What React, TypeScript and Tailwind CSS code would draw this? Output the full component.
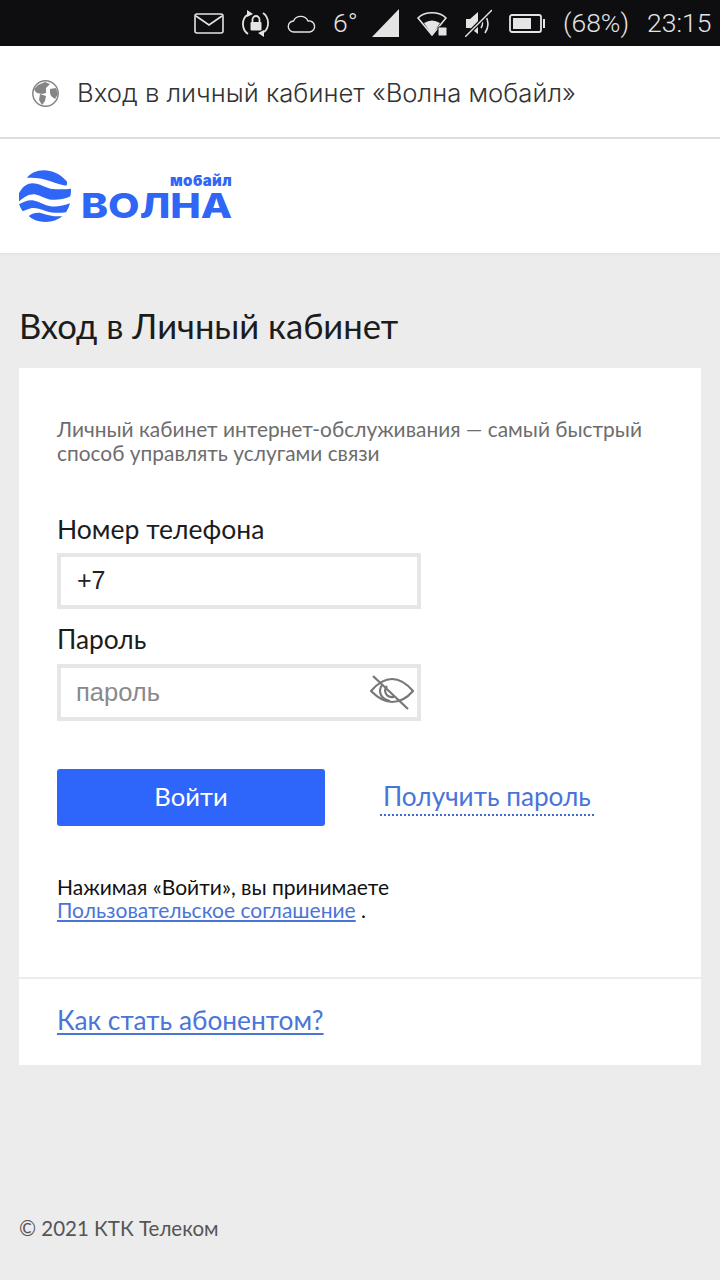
const geo = "font-['Lato','Noto_Sans',sans-serif]";

function StatusBar() {
  return (
    <div className="h-[46px] bg-[#0e0e10] flex items-center pl-[194px] text-[#e4e4e4] font-['Roboto',sans-serif] font-light">
      <svg width="30" height="21" viewBox="0 0 30 21" fill="none" stroke="currentColor" strokeWidth="1.6">
        <rect x="1" y="1" width="28" height="19" rx="2" />
        <path d="M2 3l13 9 13-9" />
      </svg>
      <svg className="ml-[17px]" width="29" height="27" viewBox="0 0 29 27" fill="none" stroke="currentColor" strokeWidth="1.8">
        <path d="M6 5C0 10 1 20 7 24M23 22c6-5 5-15-1-19" />
        <path d="M6 0l6 4-6 3zM23 27l-6-4 6-3z" fill="currentColor" stroke="none" />
        <path d="M11.500 12V9.500a3.500 3.500 0 0 1 7 0V12" />
        <rect x="9.500" y="12" width="11" height="8.500" rx="1" fill="currentColor" stroke="none" />
      </svg>
      <svg className="ml-[17px]" width="29" height="20" viewBox="0 0 29 20" fill="none" stroke="currentColor" strokeWidth="1.4">
        <path d="M7 19a5.500 5.500 0 0 1-.5-11A8 8 0 0 1 21 8a5.500 5.500 0 0 1 2 11z" />
      </svg>
      <span className="ml-[17px] w-[39px] text-[26.500px] leading-none">6°</span>
      <svg width="27" height="28" viewBox="0 0 27 28" fill="currentColor">
        <path d="M0 28L27 0v28z" />
      </svg>
      <svg className="ml-[18px]" width="30" height="25" viewBox="0 0 30 25" fill="none">
        <path d="M1 7C8 0 22 0 29 7L15 24z" stroke="currentColor" strokeWidth="1.6" />
        <path d="M7 12Q15 7 23 12L15 24z" fill="currentColor" />
        <rect x="21" y="16" width="9" height="9" rx="1" fill="currentColor" stroke="#0e0e10" />
      </svg>
      <svg className="ml-[18px]" width="27" height="28" viewBox="0 0 27 28" fill="none" stroke="currentColor">
        <path d="M1 10h4l8-7v22l-8-6H1z" fill="currentColor" stroke="none" />
        <path d="M16 10q3 4.500 0 9M20 6q6 9 0 18" strokeWidth="1.6" />
        <path d="M0 28L27 1" stroke="#0e0e10" strokeWidth="4" />
        <path d="M0 28L27 1" strokeWidth="1.4" />
      </svg>
      <svg className="ml-[17px]" width="36" height="19" viewBox="0 0 36 19" fill="none">
        <rect x="1" y="1" width="31" height="17" rx="2" stroke="currentColor" strokeWidth="1.800" />
        <rect x="4" y="4" width="18" height="11" fill="currentColor" />
        <rect x="34" y="5" width="2" height="9" fill="currentColor" />
      </svg>
      <span className="ml-[18px] w-[67px] text-[26.500px] leading-none">(68%)</span>
      <span className="ml-[17px] text-[26.500px] leading-none">23:15</span>
    </div>
  );
}

function Logo() {
  return (
    <div className="flex items-end">
      <svg width="53" height="53" viewBox="0 0 54 54" fill="#2f66f5">
        <path d="M8 9C15 -1 36 -3 49 13c0 2 0 3-1 4-8-1-14-4-21-6-7-2-13-2-19-2z" />
        <path d="M1 23c4-7 10-10 17-8 5 1 9 4 14 5 7 1 14 1 21 0 0 3 0 6-1 8-7 3-14 4-21 3-5-1-9-4-14-5-6-1-11 2-17 7-1-3-1-7 1-10z" />
        <path d="M0 36c5-3 10-5 15-4 6 1 11 5 17 6 7 1 14-1 20-3-1 3-2 6-4 9-7 1-14 1-20-1-6-2-11-4-16-3-3 1-6 2-8 3-2-2-3-5-4-7z" />
        <path d="M10 48c4-3 8-4 13-3 7 2 14 4 21 3-4 4-10 6-17 6-7 0-13-2-17-6z" />
      </svg>
      <div className="relative ml-[9px] w-[151px] h-[34px]">
        <span className="absolute right-0 top-[-15px] text-[15px] leading-none font-black tracking-[0.4px] text-[#2f66f5] font-['Inter',sans-serif]">мобайл</span>
        <span className="absolute left-0 top-[5px] origin-left scale-x-[1.2] text-[34px] leading-[26px] font-extrabold text-[#2f66f5] font-['Inter',sans-serif]">ВОЛНА</span>
      </div>
    </div>
  );
}

export default function App() {
  return (
    <div className={`w-[720px] h-[1280px] bg-[#ececec] flex flex-col ${geo}`}>
      <StatusBar />

      {/* Header */}
      <div className="h-[93px] bg-white border-b-2 border-[#dedede] flex items-center pl-[32px] pt-[3px]">
        <svg width="27" height="27" viewBox="0 0 27 27" fill="#858585">
          <circle cx="13.500" cy="13.500" r="12.700" fill="#fff" stroke="#858585" strokeWidth="1.500" />
          <path d="M2 9l4-4 7-3 5 2-4 4v5l-4 1-5-1-2-2zM8 14l6 2-1 5-3 4-3-5z" />
          <path d="M18 9l6-1 2 6-3 5-4-3-1-3z" />
        </svg>
        <span className="ml-[18px] text-[25.700px] leading-none text-[#333] font-['Inter',sans-serif] font-light">Вход в личный кабинет «Волна мобайл»</span>
      </div>

      {/* Logo */}
      <div className="h-[114px] bg-white flex items-center pl-[19px] pb-[1px] shadow-[0_1px_3px_rgba(0,0,0,0.06)]">
        <Logo />
      </div>

      <main className="px-[19px] flex-1 flex flex-col">
        <h1 className="mt-[51px] h-[64px] text-[34.600px] leading-[44px] text-[#1c1c1c]">Вход в Личный кабинет</h1>

        <div className="bg-white">
          <div className="px-[38px] pt-[49px] h-[611px] border-b-2 border-[#ececec]">
            <p className="text-[20.900px] leading-[24px] text-[#6d6d6d]">
              Личный кабинет интернет-обслуживания — самый быстрый
              <br />
              способ управлять услугами связи
            </p>

            <label className="block mt-[48px] text-[26.500px] leading-[32px] text-[#1c1c1c]">Номер телефона</label>
            <div className="mt-[8px] w-[364px] h-[56px] border-[4px] border-[#e6e6e6] flex items-center pl-[16px] pb-[1px] text-[25px] text-[#222] font-['Liberation_Sans',sans-serif]">+7</div>

            <label className="block mt-[14px] text-[26.300px] leading-[32px] text-[#1c1c1c]">Пароль</label>
            <div className="mt-[9px] w-[364px] h-[57px] border-[4px] border-[#e6e6e6] flex items-center justify-between pl-[15px] pr-[3px] text-[25.500px] text-[#8a8a8a] font-['Liberation_Sans',sans-serif]">
              <span>пароль</span>
              <svg width="44" height="36" viewBox="0 0 44 36" fill="none" stroke="#777" strokeWidth="2.200">
                <path d="M1 16C8 8 14 4 22 4c8 0 15 5 21 12-6 7-13 11-21 11-8 0-14-4-21-11z" />
                <path d="M12 10c-4 6-2 14 8 16M17 11c-4 5-1 12 7 11" />
                <path d="M3 1l35 33" />
              </svg>
            </div>

            <div className="mt-[48px] flex items-center">
              <button className="w-[268px] h-[57px] rounded-[3px] bg-[#2e65fa] text-white text-[25.600px] pb-[3px]">Войти</button>
              <a className="ml-[55px] px-[3px] pb-[1px] text-[26.200px] leading-[34px] text-[#4a75d8] border-b-2 border-dotted border-[#3f6bd0]">Получить пароль</a>
            </div>

            <p className="mt-[49px] text-[21px] leading-[23px] text-[#111]">
              Нажимая «Войти», вы принимаете
              <br />
              <a className="text-[#4a75d8] underline underline-offset-2">Пользовательское соглашение</a> .
            </p>
          </div>
          <div className="h-[86px] px-[38px] pb-[3px] flex items-center">
            <a className="text-[26.300px] text-[#4a75d8] underline underline-offset-3">Как стать абонентом?</a>
          </div>
        </div>

        <footer className="mt-[149px] text-[20.500px] leading-[28px] text-[#555]">© 2021 КТК Телеком</footer>
      </main>
    </div>
  );
}
